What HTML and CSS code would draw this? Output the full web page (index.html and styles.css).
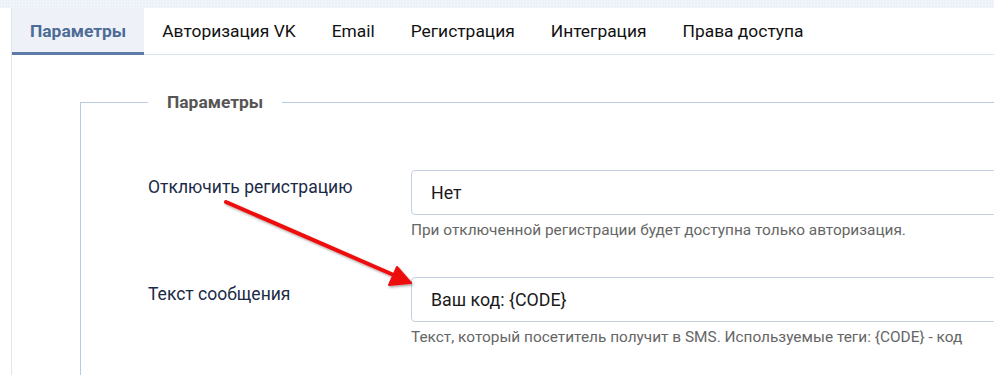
FILE: index.html
```html
<!DOCTYPE html>
<html lang="ru">
<head>
<meta charset="utf-8">
<title>Параметры</title>
<link rel="stylesheet" href="styles.css">
</head>
<body>
<div class="topstrip"></div>
<div class="page">
  <nav class="tabs">
    <a class="tab active">Параметры</a>
    <a class="tab">Авторизация VK</a>
    <a class="tab">Email</a>
    <a class="tab">Регистрация</a>
    <a class="tab">Интеграция</a>
    <a class="tab">Права доступа</a>
  </nav>
  <div class="content">
    <fieldset class="group">
      <legend class="legend">Параметры</legend>
      <div class="row">
        <label class="label">Отключить регистрацию</label>
        <div class="control">
          <div class="input">Нет</div>
          <div class="help">При отключенной регистрации будет доступна только авторизация.</div>
        </div>
      </div>
      <div class="row">
        <label class="label">Текст сообщения</label>
        <div class="control">
          <div class="input">Ваш код: {CODE}</div>
          <div class="help">Текст, который посетитель получит в SMS. Используемые теги: {CODE} - код</div>
        </div>
      </div>
    </fieldset>
  </div>
</div>
<svg class="arrow" width="994" height="375" viewBox="0 0 994 375">
  <defs>
    <filter id="sh" x="-10%" y="-10%" width="130%" height="130%">
      <feDropShadow dx="1" dy="1.5" stdDeviation="1" flood-color="#000" flood-opacity="0.35"/>
    </filter>
  </defs>
  <g filter="url(#sh)" fill="#ee1111" stroke="#ee1111">
    <line x1="226" y1="202" x2="396" y2="276" stroke-width="4" stroke-linecap="round"/>
    <polygon points="411,283 389,285 397,267" stroke-width="2" stroke-linejoin="round"/>
  </g>
</svg>
</body>
</html>
```
FILE: styles.css
```css
html, body {
  margin: 0;
  padding: 0;
  background: #ffffff;
  overflow: hidden;
  width: 994px;
  height: 375px;
  font-family: Roboto, "Liberation Sans", sans-serif;
}

.topstrip {
  height: 8px;
  background-color: #edf1f8;
  background-image: radial-gradient(circle, #f7f9fc 0.6px, transparent 0.8px);
  background-size: 3px 3px;
}

.page {
  margin-left: 11px;
  border-left: 1px solid #dfe6f0;
  height: 367px;
  width: 983px;
  overflow: hidden;
}

.tabs {
  display: flex;
  border-bottom: 1px solid #dde3ea;
  height: 47px;
  box-sizing: border-box;
}

.tab {
  display: flex;
  align-items: center;
  padding: 0 18px;
  font-size: 17.4px;
  color: #111;
  height: 47px;
  box-sizing: border-box;
  border-bottom: 3px solid transparent;
  margin-bottom: -1px;
  padding-top: 1px;
  white-space: nowrap;
}

.tab.active {
  background: #eef2f8;
  color: #4d6b96;
  font-weight: 700;
  border-bottom-color: #5d7ba4;
  margin-left: -1px;
  padding-left: 19px;
}

.content {
  padding-top: 38px;
  padding-left: 68px;
}

.group {
  margin: 0;
  border: 1px solid #b9cbe0;
  border-right: none;
  border-bottom: none;
  padding: 58px 0 0 67px;
  width: 1100px;
  min-inline-size: 0;
}

.legend {
  padding: 0 19px;
  font-size: 17.4px;
  font-weight: 700;
  color: #555;
  line-height: 19px;
}

.row {
  display: grid;
  grid-template-columns: 263px 1fr;
  margin-bottom: 38px;
}

.label {
  font-size: 17.5px;
  color: #1b2a47;
  line-height: 20px;
  padding-top: 7px;
}

.input {
  height: 45px;
  box-sizing: border-box;
  border: 1px solid #c3d0e2;
  border-radius: 4px;
  padding: 0 19px;
  display: flex;
  align-items: center;
  font-size: 17.8px;
  color: #1a1a1a;
  background: #fff;
  width: 700px;
}

.help {
  margin-top: 6px;
  font-size: 15.4px;
  line-height: 18px;
  color: #666;
  white-space: nowrap;
}

.arrow {
  position: absolute;
  left: 0;
  top: 0;
  pointer-events: none;
}
```
